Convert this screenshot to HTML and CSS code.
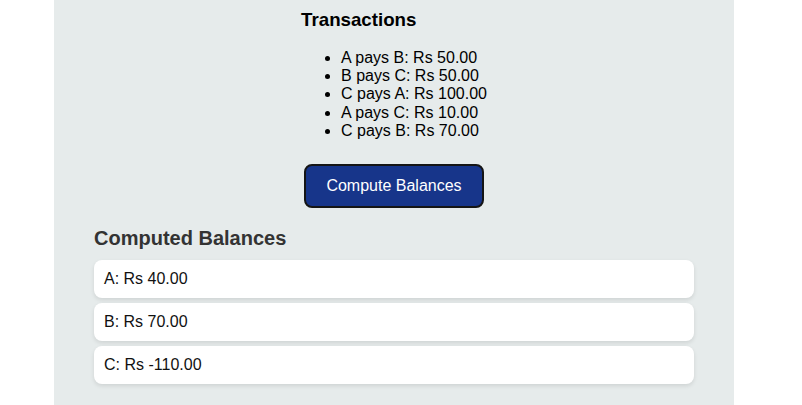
FILE: index.html
```html
<!DOCTYPE html>
<html>
<head>
<meta charset="utf-8">
<link rel="stylesheet" href="styles.css">
</head>
<body>
<div class="container">
  <div class="tx-wrap">
    <div class="tx">
      <h3 class="tx-title">Transactions</h3>
      <ul class="tx-list">
        <li>A pays B: Rs 50.00</li>
        <li>B pays C: Rs 50.00</li>
        <li>C pays A: Rs 100.00</li>
        <li>A pays C: Rs 10.00</li>
        <li>C pays B: Rs 70.00</li>
      </ul>
    </div>
  </div>
  <div class="btn-row">
    <button class="btn">Compute Balances</button>
  </div>
  <h2 class="bal-title">Computed Balances</h2>
  <div class="bal-list">
    <div class="card">A: Rs 40.00</div>
    <div class="card">B: Rs 70.00</div>
    <div class="card">C: Rs -110.00</div>
  </div>
</div>
</body>
</html>
```

FILE: styles.css
```css
html, body {
  margin: 0;
  padding: 0;
  background: #ffffff;
  height: 100%;
}
body {
  font-family: "Liberation Sans", Arial, sans-serif;
  color: #000;
}
.container {
  width: 600px;
  margin-left: 54px;
  padding: 9px 40px 20px;
  background: #e6ebeb;
  min-height: 376px;
}
.tx-wrap {
  text-align: center;
}
.tx {
  display: inline-block;
  text-align: left;
}
.tx-title {
  font-size: 18.72px;
  font-weight: bold;
  margin: 0 0 18.5px 0;
  line-height: 21.5px;
  color: #000;
}
.tx-list {
  margin: 0;
  padding-left: 40px;
  font-size: 16px;
  line-height: 18.2px;
}
.btn-row {
  display: flex;
  justify-content: center;
  margin-top: 24px;
}
.btn {
  font-family: "Liberation Sans", Arial, sans-serif;
  font-size: 16px;
  line-height: 18px;
  color: #fff;
  background: #17358a;
  border: 2px solid #151515;
  border-radius: 8px;
  padding: 11px 20px;
}
.bal-title {
  font-size: 20px;
  line-height: 23px;
  font-weight: bold;
  color: #333;
  margin: 19px 0 10px;
}
.bal-list {
  display: flex;
  flex-direction: column;
  gap: 5px;
}
.card {
  background: #fff;
  border-radius: 8px;
  padding: 10px;
  font-size: 16px;
  line-height: 18px;
  color: #111;
  box-shadow: 0 2px 4px rgba(0, 0, 0, 0.1);
}
```
